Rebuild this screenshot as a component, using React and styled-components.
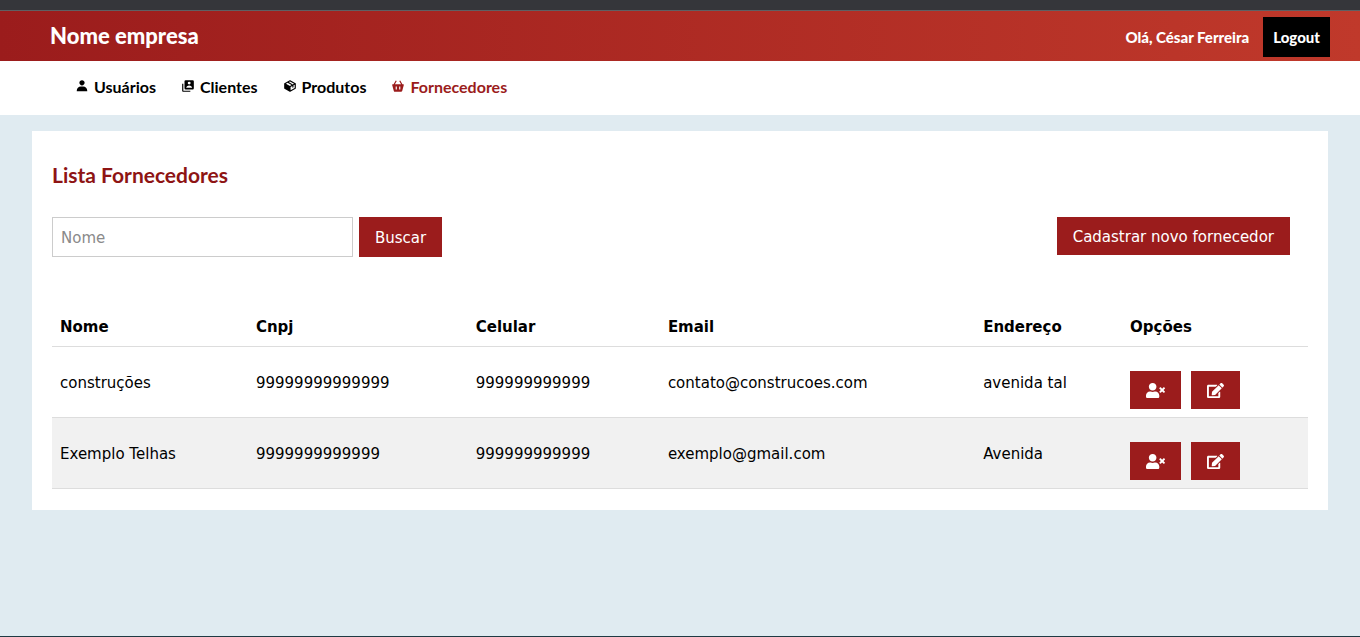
import React from 'react';
import styled, { createGlobalStyle, css } from 'styled-components';
import { BiSolidUser, BiSolidUserAccount, BiSolidPackage, BiSolidBasket } from 'react-icons/bi';
import { FaUserTimes, FaEdit } from 'react-icons/fa';

const colors = {
  primary: '#9b1c1c',
  primaryLight: '#c0392b',
  title: '#8e1414',
  page: '#e0ebf1',
  line: '#dddddd',
  stripe: '#f1f1f1',
};

const GlobalStyle = createGlobalStyle`
  *, *::before, *::after { box-sizing: border-box; }
  body {
    margin: 0;
    background: ${colors.page};
    color: #000;
    font: 15px/22px "DejaVu Sans", Verdana, sans-serif;
  }
  button, input { font: inherit; }
`;

const Page = styled.div`
  display: flex;
  flex-direction: column;
  min-height: 100vh;
`;

const TopStrip = styled.div`
  height: 11px;
  background: #35363a;
  border-bottom: 1px solid #5f6063;
`;

const Header = styled.header`
  display: flex;
  align-items: center;
  justify-content: space-between;
  height: 50px;
  padding: 0 30px 0 50px;
  background: linear-gradient(to right, ${colors.primary}, ${colors.primaryLight});
  color: #fff;
  font-family: Lato, sans-serif;
  font-weight: 900;
`;

const Brand = styled.div`
  font-size: 22px;
  line-height: 32px;
`;

const Session = styled.div`
  display: flex;
  align-items: center;
  gap: 14px;
  padding-top: 2px;
`;

const LogoutButton = styled.button`
  height: 40px;
  padding: 0 10px;
  border: 0;
  background: #000;
  color: #fff;
  cursor: pointer;
`;

const Nav = styled.nav`
  display: flex;
  align-items: center;
  gap: 25px;
  height: 54px;
  padding: 0 75px 2px;
  background: #fff;
`;

const NavLink = styled.a`
  display: flex;
  align-items: center;
  gap: 5px;
  color: ${p => (p.$active ? colors.primary : '#000')};
  font: 700 16px/24px Lato, sans-serif;
  text-decoration: none;

  svg {
    width: 14px;
    height: 14px;
    margin-bottom: 2px;
  }
`;

const Card = styled.main`
  margin: 16px 32px;
  padding: 20px 20px 21px;
  background: #fff;
`;

const Title = styled.h1`
  margin: 8px 0 26px;
  color: ${colors.title};
  font: 700 21px/32px Lato, sans-serif;
`;

const Toolbar = styled.div`
  display: flex;
  align-items: flex-start;
  justify-content: space-between;
  margin-bottom: 51px;
  padding-right: 18px;
`;

const SearchForm = styled.form`
  display: flex;
  gap: 6px;
`;

const SearchInput = styled.input`
  width: 301px;
  height: 40px;
  padding: 10px 8px 8px;
  border: 1px solid #ccc;
  border-radius: 0;
  background: #fff;

  &::placeholder {
    color: #8a8a8a;
  }
`;

const filled = css`
  border: 0;
  background: ${colors.primary};
  color: #fff;
  cursor: pointer;
`;

const Button = styled.button`
  ${filled}
  height: ${p => (p.$tall ? 40 : 38)}px;
  padding: 2px 16px 0;
`;

const Table = styled.table`
  width: 100%;
  border-collapse: collapse;
  table-layout: fixed;
`;

const HeadCell = styled.th`
  width: ${p => p.$width};
  padding: 8px;
  border-bottom: 1px solid ${colors.line};
  text-align: left;
`;

const Row = styled.tr`
  border-bottom: 1px solid ${colors.line};

  &:nth-child(even) {
    background: ${colors.stripe};
  }
`;

const Cell = styled.td`
  padding: 24px 8px 8px;
  line-height: 24px;
  vertical-align: top;
`;

const Actions = styled.div`
  display: flex;
  gap: 10px;
`;

const IconButton = styled.button`
  ${filled}
  display: flex;
  align-items: center;
  height: 38px;
  padding: 0 16px;
`;

const BottomStrip = styled.div`
  height: 1px;
  margin-top: auto;
  background: #1f3a44;
`;

const links = [
  { label: 'Usuários', Icon: BiSolidUser },
  { label: 'Clientes', Icon: BiSolidUserAccount },
  { label: 'Produtos', Icon: BiSolidPackage },
  { label: 'Fornecedores', Icon: BiSolidBasket, active: true },
];

const columns = [
  { label: 'Nome', width: '15.6%' },
  { label: 'Cnpj', width: '17.5%' },
  { label: 'Celular', width: '15.3%' },
  { label: 'Email', width: '25.1%' },
  { label: 'Endereço', width: '11.7%' },
  { label: 'Opções', width: '14.8%' },
];

const suppliers = [
  ['construções', '99999999999999', '999999999999', 'contato@construcoes.com', 'avenida tal'],
  ['Exemplo Telhas', '9999999999999', '999999999999', 'exemplo@gmail.com', 'Avenida'],
];

export default function App() {
  return (
    <Page>
      <GlobalStyle />
      <TopStrip />
      <Header>
        <Brand>Nome empresa</Brand>
        <Session>
          <span>Olá, César Ferreira</span>
          <LogoutButton type="button">Logout</LogoutButton>
        </Session>
      </Header>
      <Nav>
        {links.map(({ label, Icon, active }) => (
          <NavLink key={label} href="#" $active={active} aria-current={active ? 'page' : undefined}>
            <Icon aria-hidden="true" />
            {label}
          </NavLink>
        ))}
      </Nav>
      <Card>
        <Title>Lista Fornecedores</Title>
        <Toolbar>
          <SearchForm onSubmit={e => e.preventDefault()}>
            <SearchInput type="text" name="nome" placeholder="Nome" aria-label="Nome" />
            <Button type="submit" $tall>Buscar</Button>
          </SearchForm>
          <Button type="button">Cadastrar novo fornecedor</Button>
        </Toolbar>
        <Table>
          <thead>
            <tr>
              {columns.map(c => (
                <HeadCell key={c.label} scope="col" $width={c.width}>{c.label}</HeadCell>
              ))}
            </tr>
          </thead>
          <tbody>
            {suppliers.map(fields => (
              <Row key={fields[0]}>
                {fields.map((value, i) => <Cell key={i}>{value}</Cell>)}
                <Cell>
                  <Actions>
                    <IconButton type="button" aria-label={`Excluir ${fields[0]}`}>
                      <FaUserTimes size={19} />
                    </IconButton>
                    <IconButton type="button" aria-label={`Editar ${fields[0]}`}>
                      <FaEdit size={17} />
                    </IconButton>
                  </Actions>
                </Cell>
              </Row>
            ))}
          </tbody>
        </Table>
      </Card>
      <BottomStrip />
    </Page>
  );
}
